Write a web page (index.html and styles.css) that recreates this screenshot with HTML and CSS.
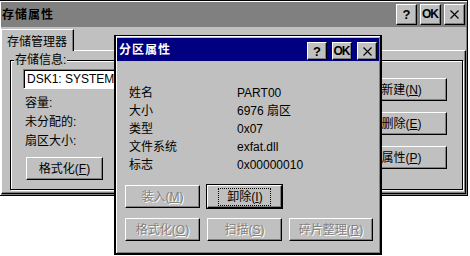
FILE: index.html
```html
<!DOCTYPE html>
<html lang="zh-CN">
<head>
<meta charset="utf-8">
<title>存储属性</title>
<link rel="stylesheet" href="styles.css">
</head>
<body>
<div class="win">
  <div class="titlebar">
    <span class="title">存储属性</span>
    <div class="tbtns">
      <span class="tbtn q">?</span>
      <span class="tbtn ok">OK</span>
      <span class="tbtn x"><svg width="9" height="9" viewBox="0 0 9 9"><path d="M0.5 0.5L8.5 8.5M8.5 0.5L0.5 8.5" stroke="#000" stroke-width="1.1" fill="none"/></svg></span>
    </div>
  </div>
  <div class="tabs"><div class="tab">存储管理器</div></div>
  <div class="panel">
    <div class="group">
      <span class="legend">存储信息:</span>
      <div class="group-body">
        <div class="left-col">
          <div class="combo">DSK1: SYSTEMPARTITION</div>
          <div class="info">
            <span class="lbl">容量:</span>
            <span class="lbl">未分配的:</span>
            <span class="lbl">扇区大小:</span>
          </div>
          <button class="btn fmt">格式化(<u>F</u>)</button>
        </div>
        <div class="right-col">
          <button class="btn rbtn">新建(<u>N</u>)</button>
          <button class="btn rbtn">删除(<u>E</u>)</button>
          <button class="btn rbtn">属性(<u>P</u>)</button>
        </div>
      </div>
    </div>
  </div>
</div>

<div class="dialog">
  <div class="dtitlebar">
    <span class="dtitle">分区属性</span>
    <div class="dtbtns">
      <span class="tbtn dt q">?</span>
      <span class="tbtn dt ok">OK</span>
      <span class="tbtn dt x"><svg width="9" height="9" viewBox="0 0 9 9"><path d="M0.5 0.5L8.5 8.5M8.5 0.5L0.5 8.5" stroke="#000" stroke-width="1.1" fill="none"/></svg></span>
    </div>
  </div>
  <div class="dbody">
    <div class="props">
      <span>姓名</span><span>PART00</span>
      <span>大小</span><span>6976 扇区</span>
      <span>类型</span><span>0x07</span>
      <span>文件系统</span><span>exfat.dll</span>
      <span>标志</span><span>0x00000010</span>
    </div>
    <div class="dbtns">
      <button class="btn dis">装入(<u>M</u>)</button>
      <button class="btn focus"><span class="frect">卸除(<u>I</u>)</span></button>
      <span class="spacer"></span>
      <button class="btn dis">格式化(<u>O</u>)</button>
      <button class="btn dis">扫描(<u>S</u>)</button>
      <button class="btn dis">碎片整理(<u>R</u>)</button>
    </div>
  </div>
</div>
</body>
</html>
```
FILE: styles.css
```css
* { box-sizing: border-box; }
html, body { margin: 0; padding: 0; }
body {
  width: 470px;
  height: 256px;
  background: #fff;
  position: relative;
  overflow: hidden;
  font-family: "Liberation Sans", "Noto Sans CJK SC", sans-serif;
  font-size: 12px;
  line-height: 14px;
  color: #000;
}
u { text-decoration: underline; text-underline-offset: 1px; }

/* outer window */
.win {
  width: 469px;
  height: 196px;
  margin-left: -1px;
  border: 1px solid #000;
  padding: 1px;
  background: #c0c0c0;
  box-shadow: inset 1px 1px #fff, inset -1px -1px #808080;
  display: flex;
  flex-direction: column;
}
.titlebar {
  height: 25px;
  background: #808080;
  display: flex;
  align-items: center;
  justify-content: space-between;
  padding: 0 1px 0 1px;
}
.title { font-weight: bold; letter-spacing: 1px; }
.tbtns { display: flex; gap: 3px; }
.tbtn {
  width: 21px;
  height: 21px;
  display: flex;
  align-items: center;
  justify-content: center;
  background: #c0c0c0;
  border: 1px solid;
  border-color: #fff #000 #000 #fff;
  box-shadow: inset -1px -1px #808080;
  font-weight: bold;
  font-size: 13px;
  line-height: 13px;
}
.tbtn.ok { font-size: 12px; letter-spacing: -1px; padding-right: 1px; }

.tabs { height: 23px; display: flex; padding-left: 0; }
.tab {
  margin-top: 2px;
  height: 22px;
  width: 73px;
  padding: 5px 0 0 5px;
  background: #c0c0c0;
  border-top: 1px solid #fff;
  border-left: 1px solid #fff;
  border-right: 1px solid #000;
  box-shadow: inset -1px 0 #808080;
  position: relative;
  z-index: 1;
  margin-bottom: -1px;
}
.panel {
  flex: 1;
  border-top: 1px solid #fff;
  border-left: 1px solid #fff;
  border-right: 1px solid #000;
  border-bottom: 1px solid #000;
  box-shadow: inset -1px -1px #808080;
  padding: 9px 0 0 8px;
}
.group {
  width: 453px;
  height: 130px;
  border: 1px solid #000;
  box-shadow: 1px 1px 0 #fff, inset 1px 1px 0 #fff;
  display: flex;
  flex-direction: column;
}
.legend {
  align-self: flex-start;
  margin: -8px 0 0 3px;
  padding: 0 1px;
  background: #c0c0c0;
  height: 14px;
}
.group-body { display: flex; flex: 1; }
.left-col {
  padding-left: 12px;
  display: flex;
  flex-direction: column;
  align-items: flex-start;
}
.combo {
  margin-top: 2px;
  width: 320px;
  height: 20px;
  background: #fff;
  border: 1px solid;
  border-color: #808080 #fff #fff #808080;
  box-shadow: inset 1px 1px #000;
  padding: 2px 0 0 3px;
  white-space: nowrap;
  overflow: hidden;
}
.info {
  margin-top: 4px;
  margin-left: 2px;
  display: grid;
  grid-template-columns: 85px;
  grid-auto-rows: 19px;
  align-items: center;
}
.btn {
  font: inherit;
  color: #000;
  display: flex;
  align-items: center;
  justify-content: center;
  height: 23px;
  padding: 0;
  background: #c0c0c0;
  border: 1px solid;
  border-color: #fff #000 #000 #fff;
  box-shadow: inset -1px -1px #808080;
  white-space: nowrap;
}
.fmt { width: 77px; margin: 7px 0 0 3px; }
.right-col {
  margin-left: auto;
  margin-right: 15px;
  padding-top: 11px;
  display: flex;
  flex-direction: column;
  gap: 11px;
}
.rbtn { width: 91px; }

/* modal dialog */
.dialog {
  position: absolute;
  left: 114px;
  top: 35px;
  width: 268px;
  height: 220px;
  border: 1px solid #000;
  border-left-width: 2px;
  border-right-width: 2px;
  border-bottom-width: 2px;
  padding: 2px 1px 1px 1px;
  background: #c0c0c0;
  box-shadow: inset 1px 1px #fff, inset -1px -1px #808080;
  display: flex;
  flex-direction: column;
}
.dtitlebar {
  height: 23px;
  background: #000080;
  color: #fff;
  display: flex;
  align-items: center;
  justify-content: space-between;
  padding: 0 2px 0 2px;
}
.dtitle { font-weight: bold; letter-spacing: 1px; }
.dtbtns { display: flex; gap: 5px; align-self: flex-end; margin-bottom: 1px; }
.tbtn.dt { width: 20px; height: 18px; color: #000; }
.dbody { padding: 23px 0 0 8px; }
.props {
  margin-left: 4px;
  display: grid;
  grid-template-columns: 108px auto;
  grid-auto-rows: 18px;
  align-items: center;
}
.dbtns {
  margin-top: 11px;
  display: grid;
  grid-template-columns: 75px 75px 84px;
  column-gap: 7px;
  row-gap: 10px;
}
.btn.dis { color: #808080; text-shadow: 1px 1px 0 #fff; }
.btn.focus {
  outline: 1px solid #000;
  border-color: #fff #000 #000 #fff;
}
.frect {
  border: 1px dotted #000;
  padding: 1px 7px 1px 8px;
  line-height: 14px;
}
.spacer { display: block; }
```
